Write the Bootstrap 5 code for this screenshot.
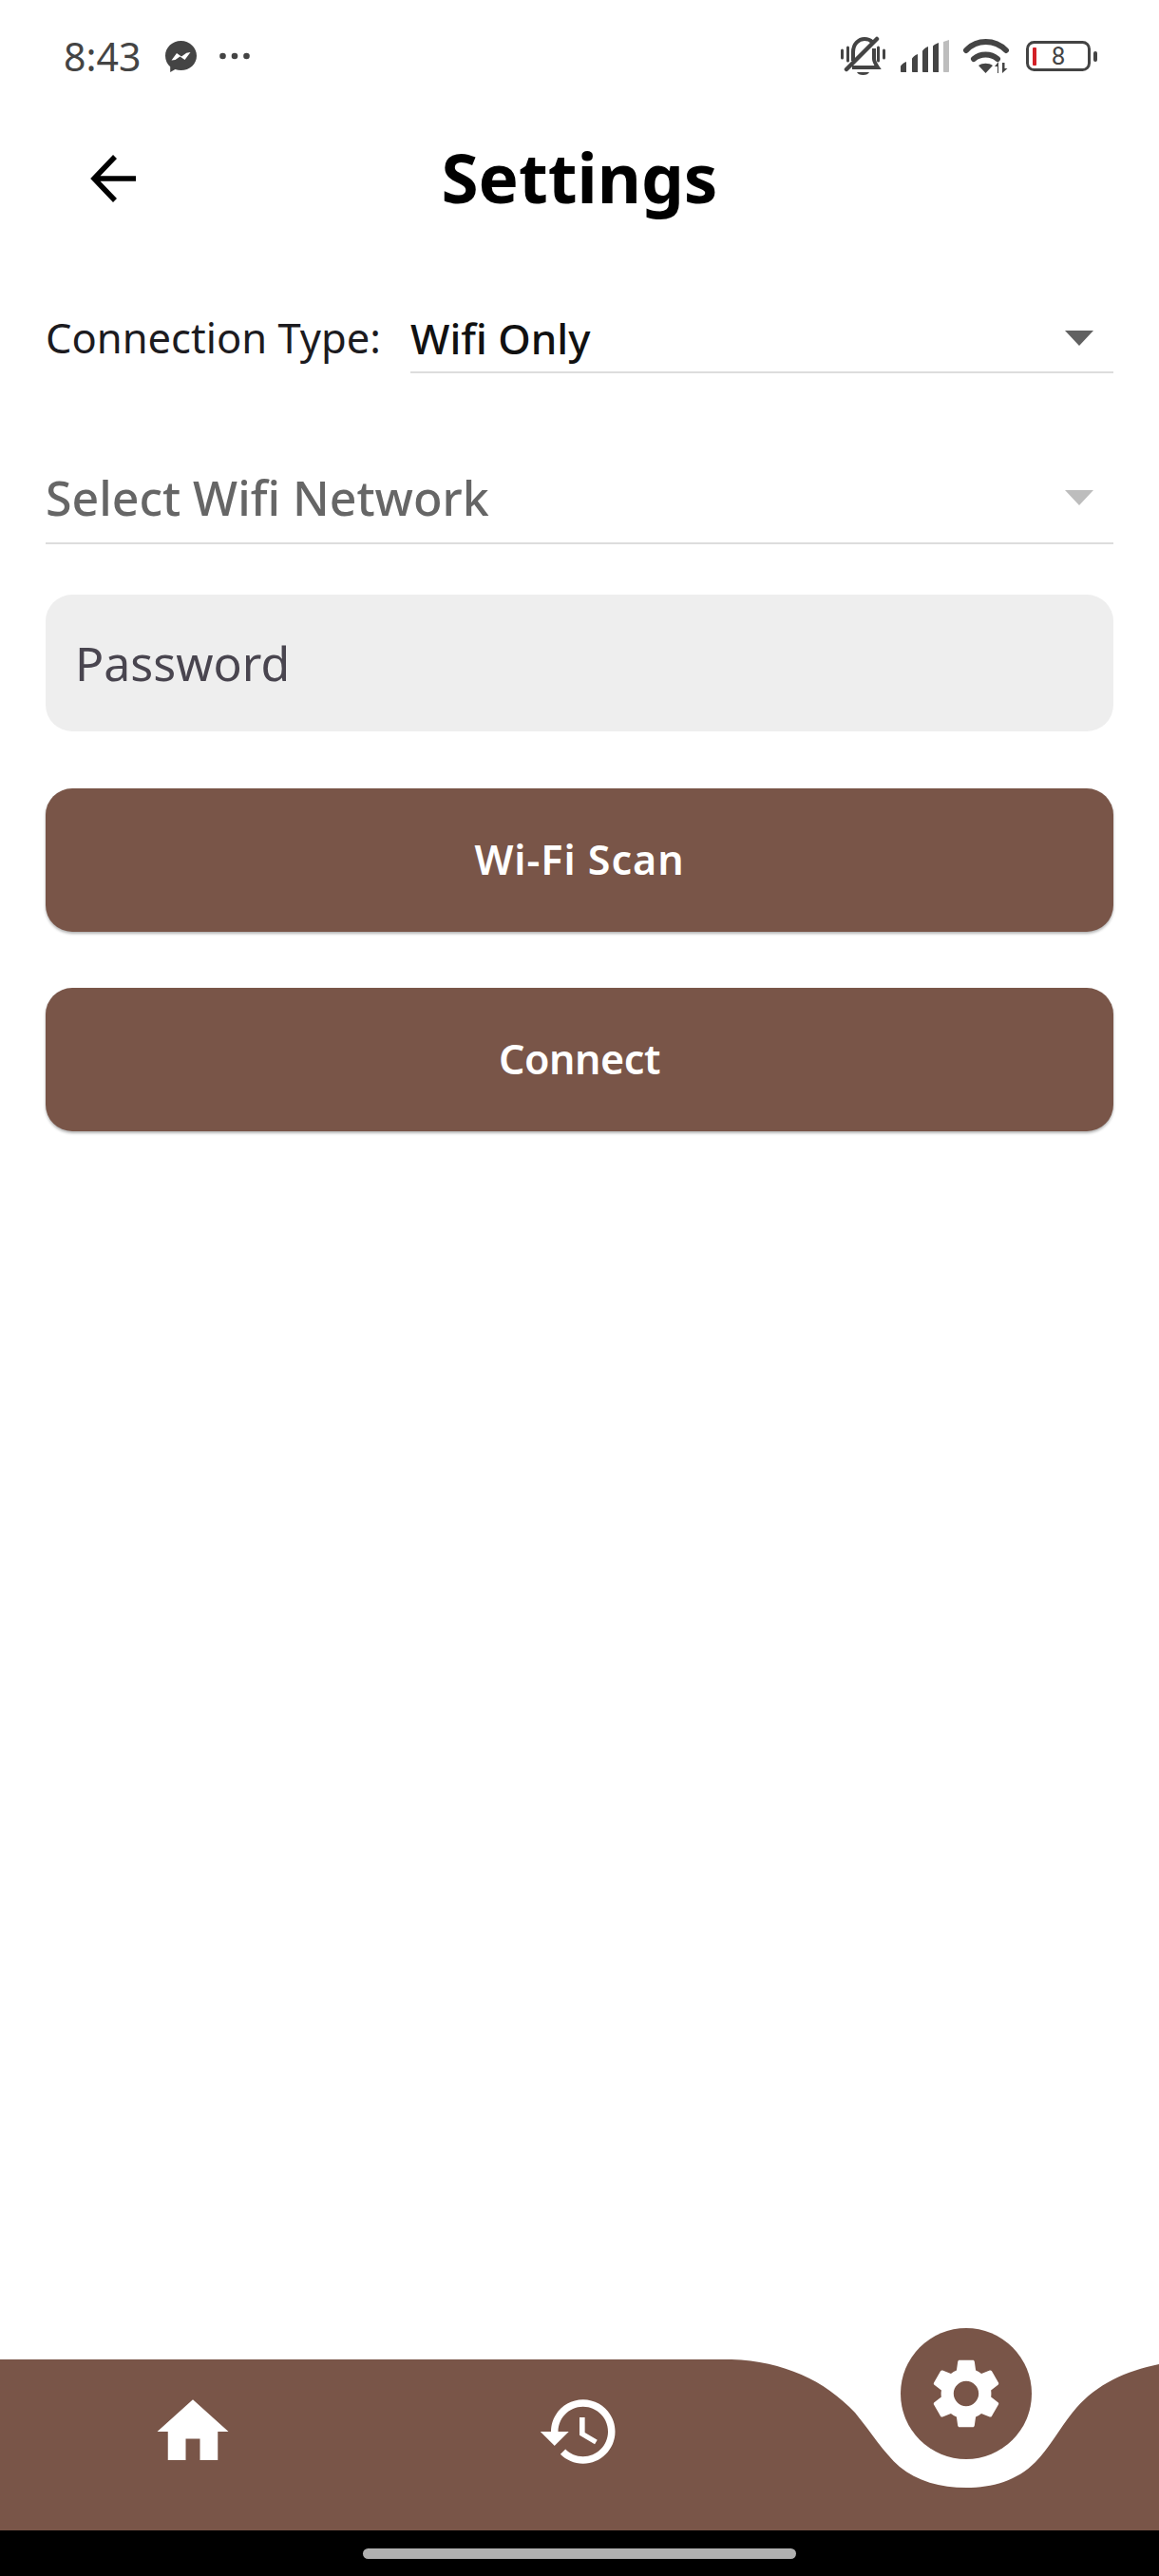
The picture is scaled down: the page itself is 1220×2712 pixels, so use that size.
<!DOCTYPE html>
<html>
<head>
  <title>Settings</title>
  <link href="https://cdn.jsdelivr.net/npm/bootstrap@5.3.0/dist/css/bootstrap.min.css" rel="stylesheet">
  <style>
    body {
      background-color: #fff;
      font-family: "Noto Sans", sans-serif;
    }
    .app-screen {
      min-height: 2712px;
    }
    .status-strip {
      height: 118px;
      padding: 0 65px 0 67px;
      color: #444;
    }
    .status-time {
      font-size: 41px;
      line-height: 1;
      margin-right: 26px;
    }
    .title-bar {
      height: 140px;
      padding-bottom: 2px;
    }
    .back-btn {
      left: 85px;
      top: 35px;
      width: 70px;
      height: 70px;
    }
    .page-title {
      font-size: 71px;
      font-weight: 700;
      color: #000;
      margin: 0;
    }
    .form-area {
      padding: 0 48px;
    }
    .conn-label {
      width: 384px;
      flex: none;
      font-size: 43.5px;
      line-height: 44px;
      color: #1c1b1f;
    }
    .pick-field {
      border-bottom: 2px solid #ddd;
      height: 60px;
      padding-right: 21px;
      padding-bottom: 12px;
    }
    .pick-value {
      font-size: 44px;
      font-weight: 500;
      color: #111;
      line-height: 46px;
    }
    .pick-wifi {
      height: 70px;
      margin-top: 110px;
      padding-bottom: 26px;
    }
    .pick-hint {
      font-size: 50px;
      font-weight: 500;
      color: #666;
      line-height: 44px;
    }
    .pass-field {
      margin-top: 53px;
      height: 144px;
      background-color: #eee;
      border: 0;
      border-radius: 28px;
      padding: 0 31px;
      font-size: 50px;
      line-height: 144px;
      color: #49454f;
    }
    .brown-btn {
      display: block;
      height: 151px;
      border: 0;
      border-radius: 28px;
      background-color: #795548;
      color: #fff;
      font-size: 43px;
      font-weight: 600;
      box-shadow: 0 2px 3px rgba(0, 0, 0, .3);
    }
    .scan-btn {
      margin-top: 60px;
      letter-spacing: 1px;
    }
    .connect-btn {
      margin-top: 59px;
      letter-spacing: -.4px;
    }
    .bottom-bar {
      height: 180px;
    }
    .bar-shape {
      left: 0;
      top: 0;
    }
    .bar-slot {
      height: 152px;
    }
    .gear-fab {
      width: 138px;
      height: 138px;
      left: 50%;
      top: -33px;
      margin-left: -69px;
      background-color: #795548;
    }
    .gesture-strip {
      height: 48px;
      background-color: #000;
    }
    .gesture-handle {
      width: 456px;
      height: 11px;
      margin-top: 19px;
      border-radius: 6px;
      background-color: #b0b0b0;
    }
  </style>
</head>
<body>
  <div class="app-screen d-flex flex-column">

    <!-- Status bar -->
    <div class="status-strip d-flex align-items-center justify-content-between">
      <div class="d-flex align-items-center">
        <span class="status-time">8:43</span>
        <svg width="33" height="33" viewBox="0 0 33 33">
          <path fill="#444" d="M16.5 0C7.4 0 0 6.9 0 15.8c0 4.6 2 8.8 5.2 11.5V33l5.2-2.9c1.9.7 3.900 1 6.100 1 9.100 0 16.500-6.600 16.500-15.300S25.600 0 16.500 0z"/>
          <path fill="#fff" d="M6.500 20.500l5.500-7.500 5 3.600 5.300-3.900 4.200-.7-6 8-5-3.600-5 3.500z"/>
        </svg>
        <svg class="ms-4" width="32" height="8" viewBox="0 0 32 8">
          <circle cx="3.500" cy="4" r="3.300" fill="#444"/>
          <circle cx="16" cy="4" r="3.300" fill="#444"/>
          <circle cx="28.500" cy="4" r="3.300" fill="#444"/>
        </svg>
      </div>
      <div class="d-flex align-items-center" style="gap: 14px">
        <svg width="49" height="42" viewBox="0 0 49 42">
          <path fill="none" stroke="#444" stroke-width="4" d="M13 26V17C13 8 19 3 25 3c3 0 6 1 8 3M35 13v11c0 3 2 6 4 9H12"/>
          <path stroke="#444" stroke-width="4.500" stroke-linecap="round" d="M6 35 38 3"/>
          <path fill="#444" d="M17 38h13c-1 2-3 3-6.500 3S18 40 17 38z"/>
          <path stroke="#444" stroke-width="3" stroke-linecap="round" d="M1.500 15v8M7.500 12v14M39.500 12v14M45.500 15v8"/>
        </svg>
        <svg width="51" height="34" viewBox="0 0 51 34">
          <path fill="#444" d="M0 28c0-1 3-4 6-5v11H1c-.6 0-1-.4-1-1zM12 20c0-1 3-4 6-5v19h-5c-.6 0-1-.4-1-1zM23 12c0-1 3-4 6-5v27h-5c-.6 0-1-.4-1-1zM34 7c0-1 3-3 6-4v31h-5c-.6 0-1-.4-1-1z"/>
          <path fill="#bdbdbd" d="M45 2l6-2v33c0 .6-.4 1-1 1h-4c-.6 0-1-.4-1-1z"/>
        </svg>
        <svg width="50" height="36" viewBox="0 0 50 36">
          <g fill="none" stroke="#444" stroke-width="6" stroke-linecap="round">
            <path d="M4 12C15 0 34 0 46 12"/>
            <path d="M12 21c7-6 18-6 25 0" stroke-width="6"/>
          </g>
          <path fill="#444" d="M17 28c4-3 11-3 15 0l-7.500 8z"/>
          <path fill="#444" d="M37 36v-7h-3l4-5v12zM42 25h2.500v6h3l-5.500 5z"/>
        </svg>
        <svg width="78" height="32" viewBox="0 0 78 32">
          <rect x="4.500" y="1.500" width="65" height="29" rx="7" fill="none" stroke="#444" stroke-width="3"/>
          <rect x="10" y="7" width="4" height="19" rx="1" fill="#d32027"/>
          <rect x="74" y="11" width="4" height="11" rx="2" fill="#444"/>
          <text x="37" y="25" text-anchor="middle" font-family="Roboto, sans-serif" font-size="26" fill="#444">8</text>
        </svg>
      </div>
    </div>

    <!-- Title -->
    <div class="title-bar position-relative d-flex align-items-center justify-content-center">
      <button class="back-btn btn p-0 border-0 position-absolute d-flex align-items-center justify-content-center" aria-label="Back">
        <svg width="50" height="50" viewBox="0 0 50 50">
          <path fill="none" stroke="#000" stroke-width="5.500" d="M48 25H4M26 2 4 25l22 23"/>
        </svg>
      </button>
      <h1 class="page-title">Settings</h1>
    </div>

    <!-- Form -->
    <div class="form-area flex-grow-1">
      <div class="d-flex" style="margin-top: 75px">
        <span class="conn-label">Connection Type:</span>
        <div class="pick-field flex-grow-1 d-flex align-items-center justify-content-between">
          <span class="pick-value">Wifi Only</span>
          <svg width="30" height="16" viewBox="0 0 30 16"><path fill="#616161" d="M0 0h30L15 16z"/></svg>
        </div>
      </div>
      <div class="pick-field pick-wifi d-flex align-items-center justify-content-between">
        <span class="pick-hint">Select Wifi Network</span>
        <svg width="30" height="16" viewBox="0 0 30 16"><path fill="#bdbdbd" d="M0 0h30L15 16z"/></svg>
      </div>
      <div class="pass-field form-control">Password</div>
      <button class="brown-btn scan-btn btn w-100">Wi-Fi Scan</button>
      <button class="brown-btn connect-btn btn w-100">Connect</button>
    </div>

    <!-- Bottom nav -->
    <div class="bottom-bar position-relative">
      <svg class="bar-shape position-absolute" width="1220" height="180" viewBox="0 0 1220 180">
        <path fill="#795548" d="M0 0H770C825 2 868 22 900 56C918 78 930 98 947 113C965 128 990 135 1017 135C1045 135 1070 128 1090 108C1105 93 1118 68 1133 51C1155 26 1185 12 1220 5V180H0Z"/>
      </svg>
      <div class="d-flex position-relative">
        <div class="bar-slot flex-fill w-100 d-flex align-items-center justify-content-center">
          <svg width="90" height="90" viewBox="0 0 24 24"><path fill="#fff" d="M10 20v-6h4v6h5v-8h3L12 3 2 12h3v8z"/></svg>
        </div>
        <div class="bar-slot flex-fill w-100 d-flex align-items-center justify-content-center">
          <svg width="90" height="90" viewBox="0 0 24 24"><path fill="#fff" d="M13 3c-4.970 0-9 4.030-9 9H1l3.890 3.890.07.14L9 12H6c0-3.870 3.130-7 7-7s7 3.130 7 7-3.130 7-7 7c-1.930 0-3.680-.79-4.940-2.060l-1.420 1.420C8.270 19.990 10.510 21 13 21c4.970 0 9-4.030 9-9s-4.030-9-9-9zm-1 5v5l4.280 2.540.72-1.210-3.500-2.080V8H12z"/></svg>
        </div>
        <div class="bar-slot flex-fill w-100 position-relative">
          <div class="gear-fab position-absolute rounded-circle d-flex align-items-center justify-content-center">
            <svg width="88" height="88" viewBox="0 0 24 24"><path fill="#fff" d="M19.140 12.940c.04-.3.06-.61.06-.94 0-.32-.02-.64-.07-.94l2.030-1.580c.18-.14.23-.41.12-.61l-1.920-3.320c-.12-.22-.37-.29-.59-.22l-2.390.96c-.5-.38-1.030-.7-1.620-.94l-.36-2.540c-.04-.24-.24-.41-.48-.41h-3.840c-.24 0-.43.17-.47.41l-.36 2.540c-.59.24-1.130.57-1.620.94l-2.390-.96c-.22-.08-.47 0-.59.22L2.740 8.870c-.12.21-.08.47.12.61l2.030 1.580c-.05.3-.09.63-.09.94s.02.64.07.94l-2.030 1.580c-.18.14-.23.41-.12.61l1.920 3.320c.12.22.37.29.59.22l2.390-.96c.5.38 1.030.7 1.620.94l.36 2.540c.05.24.24.41.48.41h3.840c.24 0 .44-.17.47-.41l.36-2.540c.59-.24 1.130-.56 1.620-.94l2.390.96c.22.08.47 0 .59-.22l1.920-3.320c.12-.22.07-.47-.12-.61l-2.010-1.580zM12 15.600c-1.980 0-3.600-1.620-3.600-3.600s1.620-3.600 3.600-3.600 3.600 1.620 3.600 3.600-1.620 3.600-3.600 3.600z"/></svg>
          </div>
        </div>
      </div>
    </div>

    <div class="gesture-strip d-flex justify-content-center">
      <div class="gesture-handle"></div>
    </div>
  </div>
  <script src="https://cdn.jsdelivr.net/npm/bootstrap@5.3.0/dist/js/bootstrap.bundle.min.js"></script>
</body>
</html>
